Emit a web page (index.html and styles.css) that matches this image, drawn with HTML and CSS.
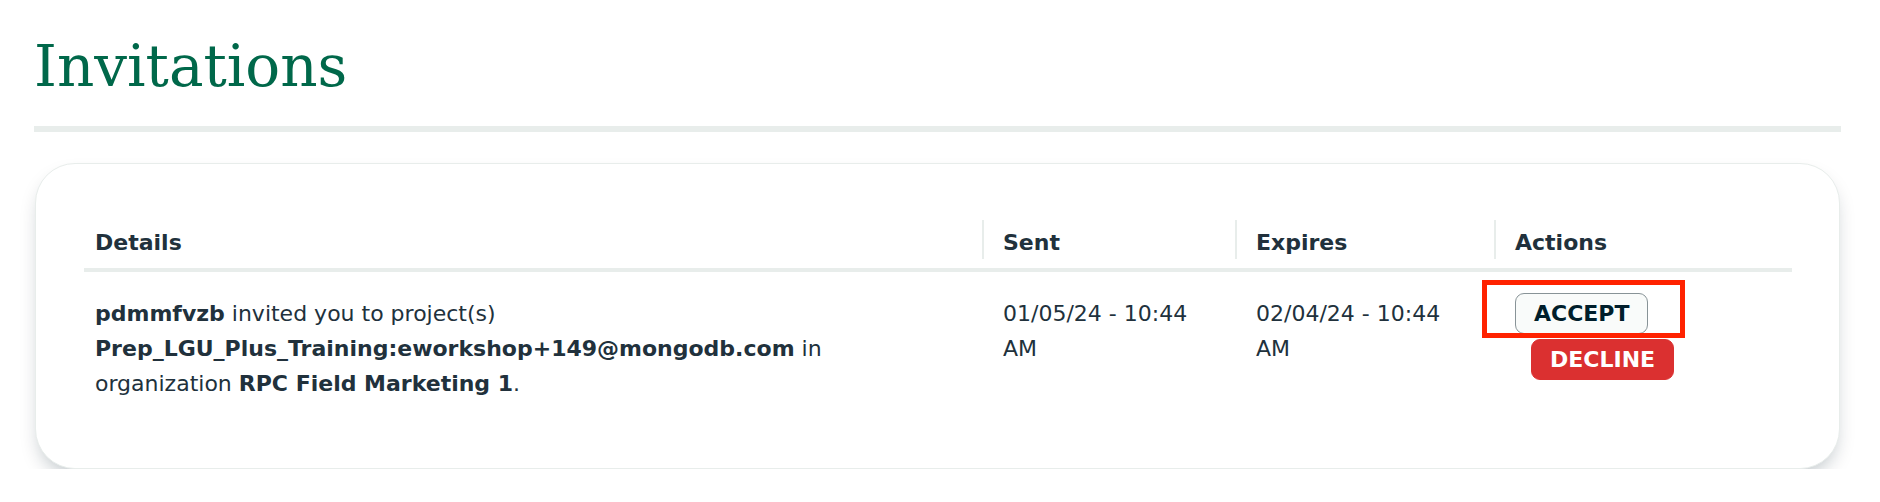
FILE: index.html
```html
<!DOCTYPE html>
<html lang="en">
<head>
<meta charset="utf-8">
<title>Invitations</title>
<link rel="stylesheet" href="styles.css">
</head>
<body>
<main class="page">
  <h1 class="title">Invitations</h1>
  <div class="divider"></div>
  <section class="card">
    <div class="row row-head">
      <div class="th th-first">Details</div>
      <div class="th th-sep">Sent</div>
      <div class="th th-sep">Expires</div>
      <div class="th th-sep">Actions</div>
    </div>
    <div class="row row-body">
      <div class="td td-first"><b>pdmmfvzb</b> invited you to project(s) <b>Prep_LGU_Plus_Training:eworkshop+149@mongodb.com</b> in <span>organization</span> <b>RPC Field Marketing 1</b>.</div>
      <div class="td td-date"><span>01/05/24 - 10:44</span> <span>AM</span></div>
      <div class="td td-date"><span>02/04/24 - 10:44</span> <span>AM</span></div>
      <div class="td td-actions">
        <div class="actions">
          <button class="btn btn-accept">ACCEPT</button>
          <button class="btn btn-decline">DECLINE</button>
        </div>
      </div>
    </div>
  </section>
</main>
</body>
</html>
```
FILE: styles.css
```css
* { box-sizing: border-box; }

body {
  margin: 0;
  background: #ffffff;
  font-family: "DejaVu Sans", "Liberation Sans", sans-serif;
  color: #21313C;
}

.page {
  padding: 34px 39px 0 34px;
}

.title {
  margin: 0;
  font-family: "DejaVu Serif", "Liberation Serif", serif;
  font-weight: normal;
  font-size: 58px;
  line-height: 64px;
  color: #00684A;
}

.divider {
  margin-top: 28px;
  height: 6px;
  background: #E8EDEB;
}

.card {
  margin: 31px 1px 0;
  padding: 48px 47px 48px 48px;
  border: 1px solid #E8EDEB;
  border-radius: 40px;
  background: #ffffff;
  box-shadow: 0 10px 20px -6px rgba(0, 30, 43, 0.28);
}

.row {
  display: grid;
  grid-template-columns: 898px 253px 259px 298px;
  font-size: 22px;
}

.row-head {
  padding: 8px 0 9px;
  border-bottom: 4px solid #E8EDEB;
}

.th {
  height: 39px;
  padding-top: 6px;
  line-height: 33px;
  font-weight: bold;
}

.th-first { padding-left: 11px; }

.th-sep {
  border-left: 2px solid #E8EDEB;
  padding-left: 19px;
}

.row-body {
  padding-bottom: 19px;
}

.td {
  padding: 24px 11px 0 21px;
  line-height: 35px;
}

.td-first {
  padding-left: 11px;
  padding-right: 60px;
}

.td-date {
  padding-right: 24px;
}

.td b { font-weight: bold; }

.td-actions {
  padding-top: 21px;
  padding-right: 0;
}

.actions {
  display: flex;
  flex-wrap: wrap;
  row-gap: 5px;
  align-items: flex-start;
}

.btn {
  display: inline-flex;
  align-items: center;
  justify-content: center;
  height: 41px;
  padding: 0 18px;
  border-radius: 9px;
  font-family: "DejaVu Sans", "Liberation Sans", sans-serif;
  font-size: 22px;
  font-weight: bold;
  line-height: 1;
  cursor: pointer;
}

.btn-accept {
  position: relative;
  background: #F9FBFA;
  border: 1px solid #889397;
  color: #001E2B;
}

.btn-accept::after {
  content: "";
  position: absolute;
  top: -14px;
  right: -38px;
  bottom: -5px;
  left: -34px;
  border: 5px solid #FF2200;
  pointer-events: none;
}

.btn-decline {
  margin-left: 16px;
  background: #DB3030;
  border: 1px solid #DB3030;
  color: #ffffff;
}
```
